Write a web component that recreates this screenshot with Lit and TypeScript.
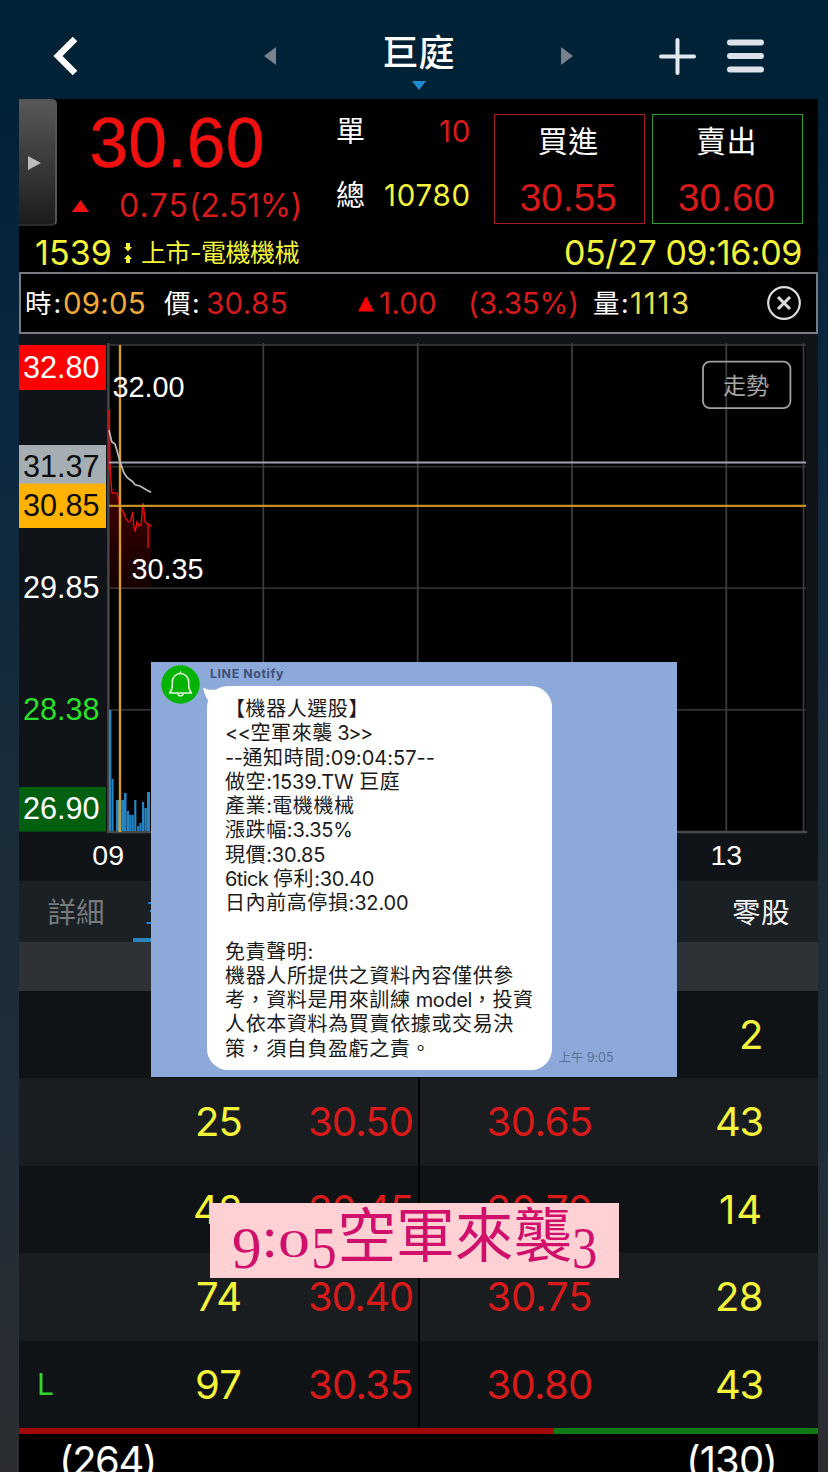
import { LitElement, html, svg, css } from "lit";
import { customElement, property, state, query } from "lit/decorators.js";

/** One line of text whose tracking is adjusted to fill the given advance width. */
@customElement("fit-text")
class FitText extends LitElement {
  @property({ type: Number }) w = 0;
  @property() text = "";
  @state() private spacing = 0;
  @query("span") private span!: HTMLSpanElement;

  static styles = css`
    :host { display: inline-block; white-space: pre; }
    span { display: inline-block; }
  `;

  firstUpdated() {
    const natural = this.span.getBoundingClientRect().width;
    if (this.w) this.spacing = (this.w - natural) / [...this.text].length;
  }

  render() {
    return html`<span style="letter-spacing:${this.spacing}px">${this.text}</span>`;
  }
}

const t = (text: string, w = 0) => html`<fit-text .text=${text} .w=${w}></fit-text>`;

/** Intraday price and volume chart. */
@customElement("trend-chart")
class TrendChart extends LitElement {
  static styles = css`
    :host { display: block; height: 547px; background: #101317; }
    svg { display: block; width: 799px; height: 547px; }
    text { font-family: "Liberation Sans", Arial, sans-serif; font-size: 30.6px; fill: #fff; }
    .small { font-size: 28.8px; }
    .hour { font-size: 28.5px; }
    .ink { fill: #0c0c0c; }
    .up { fill: #2be02b; }
    .mode { font-family: "Noto Sans CJK TC", sans-serif; font-size: 23px; fill: #a6a6a6; }
  `;

  private price =
    "109,410 109.6,440 110,463 111,480 112,493 117.3,493 119.5,505 122.7,511.7 124,512.7 126,519 128.7,522 130.7,520.7 132.7,511.7 133.7,525 135.3,531.7 137,521.7 139.3,526 141,525 142.3,510 143.3,503 145,521.7 147.7,524 149,524 151,526.7";
  private average =
    "109,430 111.7,441.7 115,444 117.3,451.7 120,461.7 124,473 127.3,477.7 132.7,481.7 135,484.7 140,486 146.7,490 151,492.3";
  private volume: [number, number, number][] = [
    [109, 2.4, 710], [111.6, 2, 779], [116, 3.2, 800], [122, 2, 800], [124, 2.6, 793],
    [126.8, 2.2, 811], [129.2, 2.2, 815], [131.6, 2.2, 815], [134.2, 2.2, 800], [137.2, 2, 826],
    [139.4, 2.2, 823], [142, 2.2, 802], [144.4, 2.4, 808], [147, 3, 792],
  ];

  render() {
    return html`<svg viewBox="19 334 799 547">
      <defs>
        <linearGradient id="fall" x1="0" y1="410" x2="0" y2="588" gradientUnits="userSpaceOnUse">
          <stop offset="0" stop-color="#f00" stop-opacity=".45" />
          <stop offset="1" stop-color="#a00000" stop-opacity=".14" />
        </linearGradient>
      </defs>
      <rect x="108" y="345" width="698" height="487" fill="#000" />
      ${[345, 466.6, 588.2, 709.8].map((y) => svg`<path d="M108 ${y}H806" stroke="#303030" stroke-width="1.8" />`)}
      ${[263.3, 417.7, 572, 726.3, 803.6].map((x) => svg`<path d="M${x} 343V832" stroke="#3c3c3c" stroke-width="1.8" />`)}
      <path d="M108.4 343V832M107 832H807" stroke="#484848" stroke-width="2.4" />
      <polygon points="${this.price} 151,588 109,588" fill="url(#fall)" />
      <path d="M109.3 410V470" stroke="#c01010" stroke-width="1.8" />
      <polyline points=${this.price} fill="none" stroke="#e80c0c" stroke-width="1.3" />
      <path d="M148 524V548" stroke="#c80c0c" stroke-width="1.6" />
      ${this.volume.map(([x, w, y]) => svg`<rect x=${x} y=${y} width=${w} height=${831 - y} fill="#2584c2" />`)}
      <path d="M109 462.6H806" stroke="#a0a3b2" stroke-width="2" />
      <path d="M109 505.8H806" stroke="#c48f22" stroke-width="2.2" />
      <path d="M120 345V832" stroke="#d39a2c" stroke-width="2.4" />
      <path d="M120 800V832" stroke="#b6a14f" stroke-width="3" />
      <polyline points=${this.average} fill="none" stroke="#bcbcbc" stroke-width="1.7" />

      <rect x="19" y="345" width="87" height="45" fill="#fe0000" />
      <rect x="19" y="445" width="87" height="39" fill="#a5afb3" />
      <rect x="19" y="483.6" width="87" height="44.4" fill="#ffb300" />
      <rect x="19" y="787" width="87" height="44.6" fill="#00600f" />
      <text x="23" y="377.5">32.80</text>
      <text class="ink" x="23" y="476.5">31.37</text>
      <text class="ink" x="23" y="515.5">30.85</text>
      <text x="23" y="598">29.85</text>
      <text class="up" x="23" y="720">28.38</text>
      <text x="23" y="819">26.90</text>
      <text class="small" x="112.5" y="397">32.00</text>
      <text class="small" x="131.5" y="579">30.35</text>
      <text class="hour" x="92.3" y="864.500">09</text>
      <text class="hour" x="710.5" y="864.500">13</text>

      <rect x="703" y="361.6" width="87.4" height="46.6" rx="7" fill="none" stroke="#a0a0a0" stroke-width="1.8" />
      <text class="mode" x="723" y="393.5">走勢</text>
    </svg>`;
  }
}

/** Message card pinned over the quote screen. */
@customElement("chat-card")
class ChatCard extends LitElement {
  static styles = css`
    :host {
      display: block; width: 526px; height: 414.5px; background: #8ca9d9; overflow: hidden;
      font-family: Inter, "Noto Sans CJK TC", sans-serif; color: #1b1b1b;
    }
    .card { display: flex; height: 100%; box-sizing: border-box; padding: 3px 0 6px 10px; }
    .avatar { display: block; flex: none; width: 39px; height: 39px; }
    .main { margin-left: 7px; display: flex; flex-direction: column; }
    .name { height: 21px; line-height: 17px; padding-left: 3px; font-size: 12.4px; font-weight: 700; color: #40507a; }
    .row { display: flex; align-items: flex-end; }
    .bubble {
      position: relative; box-sizing: border-box; width: 344.5px; height: 384px;
      padding: 11px 0 0 18px; border-radius: 21px; background: #fff; font-size: 20px;
    }
    .tail { position: absolute; left: -4px; top: 0; width: 24px; height: 16px; }
    .line { display: block; height: 24.25px; line-height: 24.25px; white-space: pre; }
    .time { margin-left: 7px; height: 26px; line-height: 27px; font-size: 12.4px; color: #5a7096; }
  `;

  private lines: [string, number][][] = [
    [["【機器人選股】", 144]],
    [["<<", 25.5], ["空軍來襲", 82.5], [" 3>>", 39]],
    [["--", 17.5], ["通知時間", 82.5], [":09:04:57--", 110]],
    [["做空", 41.2], [":1539.TW ", 93], ["巨庭", 41.2]],
    [["產業", 41.2], [":", 6], ["電機機械", 82.5]],
    [["漲跌幅", 61.8], [":3.35%", 66]],
    [["現價", 41.2], [":30.85", 59]],
    [["6tick ", 48], ["停利", 41.2], [":30.40", 60]],
    [["日內前高停損", 123.5], [":32.00", 60]],
    [],
    [["免責聲明", 82.5], [":", 6]],
    [["機器人所提供之資料內容僅供參", 289]],
    [["考，資料是用來訓練", 185.5], [" model", 61.5], ["，投資", 61.5]],
    [["人依本資料為買賣依據或交易決", 289]],
    [["策，須自負盈虧之責。", 206]],
  ];

  render() {
    return html`<div class="card">
      <svg class="avatar" viewBox="0 0 39 39">
        <circle cx="19.5" cy="19.5" r="19.2" fill="#05b305" />
        <g fill="none" stroke="#e4f7e0" stroke-width="1.5" stroke-linejoin="round" stroke-linecap="round">
          <path d="M8.500 28c2-2 2.800-4 2.800-7.500V17c0-4.800 3.500-8.600 8.200-8.600s8.200 3.800 8.200 8.600v3.500c0 3.500.8 5.500 2.800 7.500z" />
          <path d="M19.500 7v1.200M16.800 29c.6 2.500 4.800 2.500 5.400 0" />
        </g>
      </svg>
      <div class="main">
        <div class="name">${t("LINE Notify", 74)}</div>
        <div class="row">
          <div class="bubble">
            <svg class="tail" viewBox="0 0 24 16"><path d="M0 1.500C4 4 10 4.500 15 3L5 14.500C3 11 1 7 0 1.500z" fill="#fff" /></svg>
            ${this.lines.map((l) => html`<span class="line">${l.map(([s, w]) => t(s, w))}</span>`)}
          </div>
          <div class="time">${t("上午 9:05", 55)}</div>
        </div>
      </div>
    </div>`;
  }
}

@customElement("app-root")
class AppRoot extends LitElement {
  static styles = css`
    :host {
      display: block; position: relative; width: 828px; height: 1472px; overflow: hidden;
      background: linear-gradient(#002236 0, #002236 100px, #0b2840 400px, #1b2c38 850px, #1f2d38 1120px, #2a2d33 1400px, #2b2d30);
      font-family: Inter, "Noto Sans CJK TC", sans-serif; color: #fff;
    }
    .screen { width: 799px; margin-left: 19px; }
    header { height: 99px; display: flex; align-items: center; box-sizing: border-box; padding: 13px 52px 0 33px; }
    header svg { display: block; flex: none; }
    .prev { margin-left: 186px; }
    .title { width: 285px; height: 61px; box-sizing: border-box; padding-top: 5px; display: flex; flex-direction: column; align-items: center; font-size: 36px; font-weight: 500; line-height: 44px; }
    .title svg { margin-top: 6px; }
    .plus { margin-left: 85px; }
    .menu { margin-left: 29px; }

    .quote { height: 173px; background: #000; }
    .top { height: 127px; display: flex; }
    .handle {
      width: 38px; box-sizing: border-box; border: 2px solid #555; border-left: 0; border-bottom-color: #2b2b2b; border-radius: 0 5px 5px 0;
      background: linear-gradient(#585858, #1c1c1c); display: flex; align-items: center; padding-left: 8px;
    }
    .last { width: 247px; display: flex; flex-direction: column; color: #f01010; }
    .price { font: 69.500px/88px "Liberation Sans", sans-serif; padding-left: 32.500px; -webkit-text-stroke: .5px #f01010; }
    .change { display: flex; align-items: center; height: 38px; line-height: 38px; padding-left: 15px; font-size: 32px; color: #d81a1a; }
    .change svg { margin-right: 30px; }
    .vols { width: 167px; display: grid; grid-template-rows: 64px 64px; padding-left: 32px; box-sizing: border-box; line-height: 64px; font-size: 29.5px; }
    .vol { display: flex; justify-content: space-between; }
    .yellow { color: #f4f43a; }
    .red { color: #d81a1a; }
    .cjk { font-size: 29px; line-height: 65px; height: 64px; }
    .box { box-sizing: border-box; height: 110px; margin-top: 15px; text-align: center; border: 1.500px solid #a51c1c; }
    .box.buy { width: 150.500px; margin-left: 23px; }
    .box.sell { width: 151px; margin-left: 7.500px; border-color: #2f9d35; }
    .box div { font-size: 30px; line-height: 53px; height: 54px; }
    .box .amt { font: 38.500px/58px "Liberation Sans", sans-serif; }
    .box { padding-right: 2px; }
    .bottom { height: 38px; padding: 8px 16px 0 16px; display: flex; align-items: center; line-height: 38px; font-size: 34px; color: #f4f43a; }
    .bottom svg { margin: 0 9px 0 12px; }
    .bottom .sector { font-size: 25px; flex: 1; }

    .info { box-sizing: border-box; height: 62px; border: 2px solid #777a80; background: #000; display: flex; align-items: center; padding: 0 15.500px 0 4px; font-size: 29.500px; line-height: 58px; }
    .info .k { font-size: 26.500px; }
    .info .cost { margin: 0 5px 0 18px; }
    .info .pct { margin-left: 31px; }
    .info .qty { margin-left: 14px; }
    .info .close { margin-left: auto; }
    .orange { color: #efaa38; }
    .gold { color: #e8dc4a; }

    .tabs { height: 61px; background: #1a2024; display: flex; font-size: 28.500px; line-height: 64px; }
    .tab { width: 114px; height: 61px; box-sizing: border-box; text-align: center; color: #777b7d; }
    .tab.on { color: #2a86c0; border-bottom: 4px solid #2a86c0; text-align: left; padding-left: 12px; }
    .tab.far { color: #f2f2f2; margin-left: auto; }
    .heads { height: 49px; background: #2e3135; }
    .book { display: grid; grid-template-rows: repeat(5, 87.400px); }
    .level { display: grid; grid-template-columns: 48px 175px 171px 5px 2px 172.500px 170.500px; text-align: right; font-size: 40px; line-height: 88px; background: #101316; }
    .level:nth-child(even) { background: #191d20; }
    .level i { background: #000; grid-column: 5; }
    .level .mark { font-size: 30px; color: #2fd42f; text-align: left; padding-left: 18px; line-height: 86px; }
    .ratio { display: flex; height: 6px; background: #107a14; }
    .ratio div { background: #a00808; width: 67%; }
    .totals { height: 40px; overflow: hidden; background: #000; display: flex; justify-content: space-between; padding: 1px 41px 0 40px; line-height: 52px; font-size: 40px; }

    chat-card { position: absolute; left: 151px; top: 662px; }
    .banner {
      position: absolute; left: 210px; top: 1203px; width: 409px; height: 74.500px; box-sizing: border-box; background: #ffd1d4; color: #d0106a;
      padding-left: 22px; white-space: nowrap; line-height: 65px; font-size: 58.700px;
    }
    .num { font-family: "Liberation Serif", serif; font-size: 59px; line-height: 1px; }
    .drop { display: inline-block; vertical-align: -11px; }
    .narrow { transform: scaleX(.86); transform-origin: 0 50%; }
    .five { transform-origin: 60% 50%; width: 28px; }
    .zero { display: inline-block; font-size: 40px; width: 31.500px; transform: scaleX(1.600); transform-origin: 0 50%; }
  `;

  private levels = [
    ["", "", 0, "30.55", "30.60", "2", 24],
    ["", "25", 47, "30.50", "30.65", "43", 48],
    ["", "42", 49, "30.45", "30.70", "14", 44],
    ["", "74", 46, "30.40", "30.75", "28", 48],
    ["L", "97", 47, "30.35", "30.80", "43", 48],
  ] as [string, string, number, string, string, string, number][];

  render() {
    return html`<div class="screen">
        <header>
          <svg width="26" height="42" viewBox="0 0 26 42"><path d="M23 4L6 21l17 17" fill="none" stroke="#fff" stroke-width="6.500" /></svg>
          <svg class="prev" width="12" height="18" viewBox="0 0 12 18"><path d="M0 9L12 0v18z" fill="#78838c" /></svg>
          <div class="title">${t("巨庭")}<svg width="14" height="9" viewBox="0 0 14 9"><path d="M0 0h14L7 9z" fill="#1f8bd0" /></svg></div>
          <svg width="12" height="18" viewBox="0 0 12 18"><path d="M12 9L0 0v18z" fill="#78838c" /></svg>
          <svg class="plus" width="39" height="39" viewBox="0 0 39 39"><path d="M19.500 3v33M3 19.500h33" stroke="#e3e8ee" stroke-width="4" stroke-linecap="round" /></svg>
          <svg class="menu" width="38" height="36" viewBox="0 0 38 36"><path d="M4 4.500h31M4 18h31M4 31.500h31" stroke="#dde2ea" stroke-width="6" stroke-linecap="round" /></svg>
        </header>
        <section class="quote">
          <div class="top">
            <div class="handle"><svg width="14" height="14" viewBox="0 0 14 14"><path d="M1 0l13 7-13 7z" fill="#bdbdbd" /></svg></div>
            <div class="last">
              <div class="price">${t("30.60", 175)}</div>
              <div class="change"><svg width="17" height="12" viewBox="0 0 17 12"><path d="M8.500 0L17 12H0z" fill="#f01010" /></svg>${t("0.75", 70)}${t("(2.51%)", 113)}</div>
            </div>
            <div class="vols">
              <div class="vol"><span class="cjk">單</span><span class="red">${t("10", 32)}</span></div>
              <div class="vol"><span class="cjk">總</span><span class="yellow">${t("10780", 87)}</span></div>
            </div>
            <div class="box buy"><div>${t("買進", 61)}</div><div class="amt red">${t("30.55", 97)}</div></div>
            <div class="box sell"><div>${t("賣出", 61)}</div><div class="amt red">${t("30.60", 97)}</div></div>
          </div>
          <div class="bottom">
            ${t("1539", 77)}
            <svg width="8" height="22" viewBox="0 0 8 22"><path d="M2 1h4v4h2L4 9.500 0 5h2zM2 21h4v-4h2l-4-4.500L0 17h2z" fill="#f4f43a" /></svg>
            <span class="sector">${t("上市-電機機械", 158)}</span>
            ${t("05/27 09:16:09", 238)}
          </div>
        </section>
        <section class="info">
          <span class="k">${t("時:", 38)}</span><span class="orange">${t("09:05", 83)}</span>
          <span class="k cost">${t("價:", 37)}</span><span class="red">${t("30.85", 82)}</span>
          <svg width="91" height="17" viewBox="0 0 91 17"><path d="M78 1L86 16.500H70z" fill="#f80000" /></svg>
          <span class="red">${t("1.00", 58)}</span><span class="red pct">${t("(3.35%)", 111)}</span>
          <span class="k qty">${t("量:", 37)}</span><span class="gold">${t("1113", 61)}</span>
          <svg class="close" width="34" height="34" viewBox="0 0 34 34"><g fill="none" stroke="#ddd"><circle cx="17" cy="17" r="15.800" stroke-width="2.200" /><path d="M11 11l12 12M23 11L11 23" stroke-width="3" /></g></svg>
        </section>
        <trend-chart></trend-chart>
        <nav class="tabs">
          <div class="tab">${t("詳細")}</div>
          <div class="tab on">${t("五檔")}</div>
          <div class="tab far">${t("零股", 58)}</div>
        </nav>
        <div class="heads"></div>
        <section class="book">
          ${this.levels.map(
            ([m, q, qw, b, a, aq, aw]) => html`<div class="level">
              <span class="mark">${m}</span><span class="yellow">${t(q, qw)}</span><span class="red">${t(b, 105)}</span><i></i>
              <span class="red">${t(a, 106)}</span><span class="yellow">${t(aq, aw)}</span>
            </div>`,
          )}
        </section>
        <div class="ratio"><div></div></div>
        <div class="totals">${t("(264)", 97)}${t("(130)", 91)}</div>
      </div>
      <chat-card></chat-card>
      <div class="banner"><span class="num"><span class="drop">9</span>:<span class="zero">0</span><span class="drop narrow five">5</span></span>空軍來襲<span class="num"><span class="drop narrow">3</span></span></div>`;
  }
}
